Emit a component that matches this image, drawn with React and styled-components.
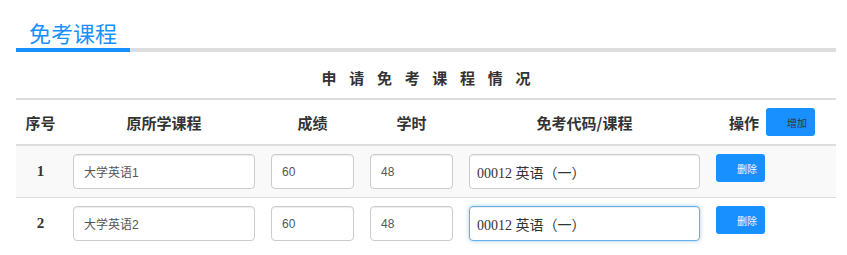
import React from "react";
import styled, { createGlobalStyle, css } from "styled-components";

const Global = createGlobalStyle`
  html, body { margin: 0; padding: 0; background: #fff; }
  body { font-family: "Liberation Sans", "Noto Sans CJK SC", sans-serif; color: #333; }
  * { box-sizing: border-box; }
`;

const Page = styled.div`
  width: 852px;
  padding: 16px 16px 0 16px;
`;

const TitleBar = styled.div`
  display: flex;
  border-bottom: 4px solid #dddddd;
`;

const Title = styled.h2`
  margin: 0 0 -4px 0;
  padding: 0 13px 0 13px;
  font-family: "Noto Sans CJK SC", sans-serif;
  font-weight: 400;
  font-size: 22px;
  line-height: 32px;
  color: #1890ff;
  border-bottom: 4px solid #1890ff;
`;

const Caption = styled.div`
  margin: 16px 0 10px;
  text-align: center;
  font-family: "Noto Sans CJK SC", sans-serif;
  font-weight: 700;
  font-size: 15px;
  line-height: 20px;
  letter-spacing: 12.7px;
  padding-left: 12.7px;
  color: #333;
`;

const Table = styled.div`
  border-top: 2px solid #dddddd;
`;

const Row = styled.div`
  display: grid;
  grid-template-columns: 49px 198px 99px 99px 247px 128px;
  background: ${(p) => (p.$striped ? "#f9f9f9" : "#fff")};
  ${(p) =>
    p.$head
      ? css`
          border-bottom: 2px solid #dddddd;
          height: 46px;
        `
      : css`
          border-bottom: ${p.$last ? "none" : "1px solid #dddddd"};
        `}
`;

const HeadCell = styled.div`
  display: flex;
  align-items: center;
  justify-content: center;
  gap: 7px;
  font-family: "Noto Sans CJK SC", sans-serif;
  font-weight: 700;
  font-size: 15px;
  color: #333;
`;

const Cell = styled.div`
  padding: 8px;
  display: flex;
  align-items: flex-start;
  justify-content: ${(p) => (p.$center ? "center" : "flex-start")};
`;

const Num = styled.span`
  font-family: "Liberation Serif", serif;
  font-weight: 700;
  font-size: 15px;
  line-height: 35px;
  color: #333;
`;

const Input = styled.input`
  width: 100%;
  height: 35px;
  padding: 0 ${(p) => (p.$serif ? "7px" : "10px")};
  border: 1px solid ${(p) => (p.$focus ? "#66afe9" : "#cccccc")};
  border-radius: 4px;
  background: #fff;
  color: ${(p) => (p.$serif ? "#333" : "#555")};
  font-family: ${(p) =>
    p.$serif
      ? `"Liberation Serif", "Noto Sans CJK SC", serif`
      : `"Liberation Sans", "Noto Sans CJK SC", sans-serif`};
  font-size: ${(p) => (p.$serif ? "14px" : "12px")};
  box-shadow: ${(p) =>
    p.$focus
      ? "inset 0 1px 1px rgba(0,0,0,.075), 0 0 4px rgba(102,175,233,.6)"
      : "inset 0 1px 1px rgba(0,0,0,.075)"};
  outline: none;
`;

const Button = styled.button`
  width: 49px;
  height: 28px;
  padding: 0 0 0 21px;
  border: none;
  border-radius: 3px;
  background: #1890ff;
  color: ${(p) => (p.$dark ? "#333" : "#f4f8ff")};
  font-family: "Noto Sans CJK SC", sans-serif;
  font-size: 10px;
  text-align: left;
  cursor: pointer;
`;

const rows = [
  { n: 1, course: "大学英语1", score: "60", hours: "48", code: "00012 英语（一）" },
  { n: 2, course: "大学英语2", score: "60", hours: "48", code: "00012 英语（一）", focus: true },
];

export default function App() {
  return (
    <>
      <Global />
      <Page>
        <TitleBar>
          <Title>免考课程</Title>
        </TitleBar>
        <Caption>申请免考课程情况</Caption>
        <Table>
          <Row $head>
            <HeadCell>序号</HeadCell>
            <HeadCell>原所学课程</HeadCell>
            <HeadCell>成绩</HeadCell>
            <HeadCell>学时</HeadCell>
            <HeadCell>免考代码/课程</HeadCell>
            <HeadCell>
              操作
              <Button $dark>增加</Button>
            </HeadCell>
          </Row>
          {rows.map((r, i) => (
            <Row key={r.n} $striped={i % 2 === 0} $last={i === rows.length - 1}>
              <Cell $center>
                <Num>{r.n}</Num>
              </Cell>
              <Cell>
                <Input defaultValue={r.course} />
              </Cell>
              <Cell>
                <Input defaultValue={r.score} />
              </Cell>
              <Cell>
                <Input defaultValue={r.hours} />
              </Cell>
              <Cell>
                <Input $serif $focus={r.focus} defaultValue={r.code} />
              </Cell>
              <Cell>
                <Button>删除</Button>
              </Cell>
            </Row>
          ))}
        </Table>
      </Page>
    </>
  );
}
